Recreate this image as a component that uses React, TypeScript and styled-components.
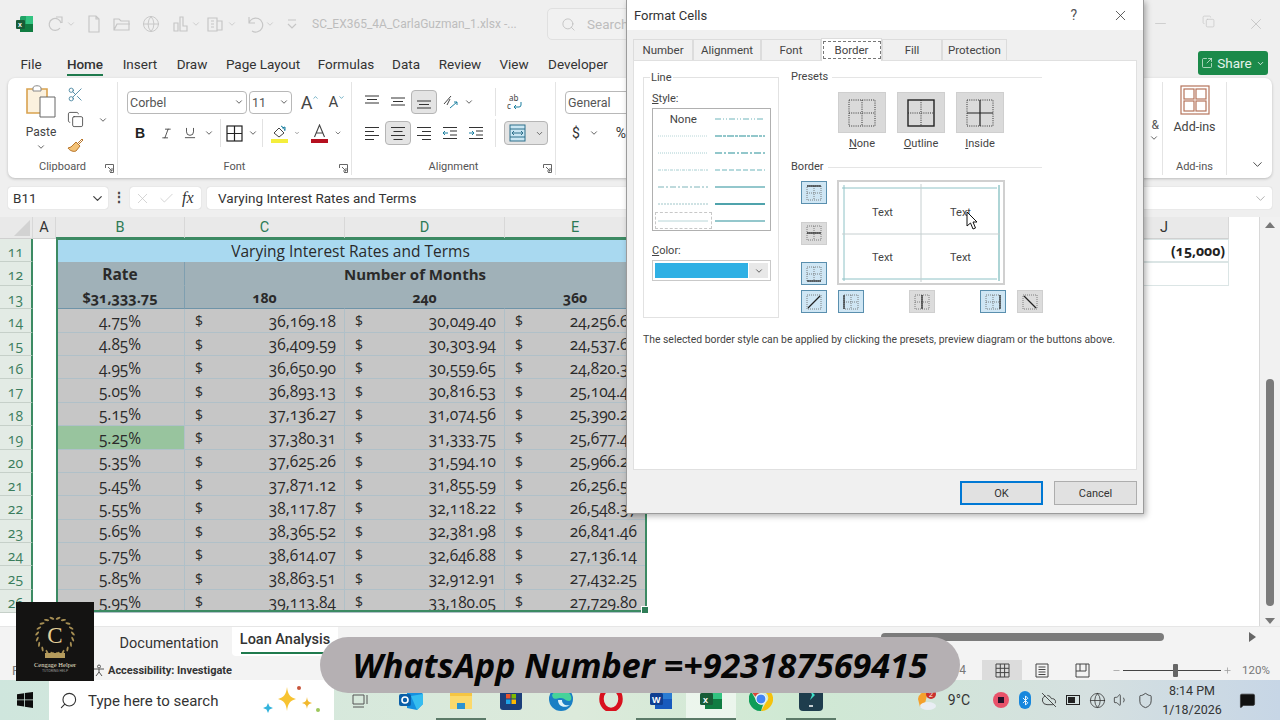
import * as React from 'react';
import styled, { createGlobalStyle } from 'styled-components';
import {
  ChevronDown,
  ChevronUp,
  Copy,
  Globe,
  Italic,
  Minus,
  Plus,
  Scissors,
  Search,
  Underline,
  Volume1,
  X,
  Check,
  Bluetooth,
  CloudOff,
  Shield,
  MessageSquare,
  SquareArrowOutUpRight,
} from 'lucide-react';

const uiFont = `Roboto, "Noto Sans", sans-serif`;
const cellFont = `"Open Sans", "Noto Sans", sans-serif`;

const GlobalStyle = createGlobalStyle`
  html, body { margin: 0; padding: 0; }
  body { font-family: ${uiFont}; overflow: hidden; }
  * { box-sizing: border-box; }
`;

const Page = styled.div`
  position: relative;
  width: 1280px;
  height: 720px;
  overflow: hidden;
  background: #efefef;
  display: flex;
  flex-direction: column;
`;

/* title bar */
const TitleBar = styled.div`
  height: 47px;
  display: flex;
  align-items: center;
  padding: 1px 0 0 16px;
  color: #c4c4c4;
  flex: none;
`;
const QuickGap = styled.span<{ $w: number; $ml?: number }>`
  display: inline-flex;
  justify-content: center;
  width: ${(p) => p.$w}px;
  margin-left: ${(p) => p.$ml ?? 0}px;
  flex: none;
`;
const FileName = styled.span`
  font-size: 12px;
  color: #bdbdbd;
  white-space: nowrap;
  width: 235px;
  margin-left: 10px;
`;
const SearchBox = styled.div`
  width: 170px;
  height: 32px;
  border: 1px solid #e0e0e0;
  border-radius: 5px;
  background: #f1f1f1;
  display: flex;
  align-items: center;
  padding-left: 13px;
  gap: 11px;
  font-size: 13.5px;
  color: #bdbdbd;
`;
const WindowButtons = styled.div`
  margin-left: auto;
  display: flex;
  color: #c2c2c2;
`;
const WindowButton = styled.span`
  width: 48px;
  display: flex;
  justify-content: center;
`;

/* ribbon tabs */
const TabRow = styled.div`
  height: 31px;
  display: flex;
  padding-left: 4px;
  flex: none;
`;
const Tab = styled.span<{ $w: number; $active?: boolean }>`
  position: relative;
  width: ${(p) => p.$w}px;
  text-align: center;
  font-size: 13.5px;
  line-height: 35px;
  color: #333;
  font-weight: ${(p) => (p.$active ? 500 : 400)};
  &::after {
    content: '';
    display: ${(p) => (p.$active ? 'block' : 'none')};
    position: absolute;
    left: 9px;
    right: 9px;
    bottom: 2px;
    height: 2px;
    background: #1f7a4d;
  }
`;
const ShareButton = styled.div`
  margin: 4px 12px 3px auto;
  width: 70px;
  background: #1b8a4a;
  color: #e6f3ea;
  border-radius: 3px;
  display: flex;
  align-items: center;
  justify-content: center;
  gap: 4px;
  font-size: 13.5px;
`;

/* ribbon */
const Ribbon = styled.div`
  height: 100px;
  margin: 0 8px;
  background: #fff;
  border-radius: 7px;
  box-shadow: 0 1px 3px rgba(0, 0, 0, 0.22);
  display: flex;
  flex: none;
  padding: 4px 0 3px;
`;
const Group = styled.div<{ $w: number; $noLine?: boolean }>`
  position: relative;
  width: ${(p) => p.$w}px;
  flex: none;
  display: flex;
  flex-direction: column;
  border-right: ${(p) => (p.$noLine ? 'none' : '1px solid #e4e4e4')};
`;
const GroupBody = styled.div`
  flex: 1;
  display: flex;
  min-height: 0;
`;
const GroupLabel = styled.div`
  height: 17px;
  font-size: 11px;
  line-height: 18px;
  text-align: center;
  color: #555;
  white-space: nowrap;
`;
const Launcher = styled.svg`
  position: absolute;
  right: 3px;
  bottom: 2px;
  width: 9px;
  height: 9px;
`;
const PasteColumn = styled.div`
  width: 50px;
  margin-left: 8px;
  display: flex;
  flex-direction: column;
  align-items: center;
  font-size: 12px;
  line-height: 15px;
  color: #444;
`;
const PasteIcon = styled.svg`
  margin: 2px 0 7px;
`;
const PasteChevron = styled.span`
  margin-top: 2px;
  display: flex;
`;
const SmallColumn = styled.div`
  width: 42px;
  display: flex;
  flex-direction: column;
`;
const SmallRow = styled.div`
  height: 26px;
  display: flex;
  align-items: center;
  justify-content: space-between;
  padding: 0 0 0 1px;
`;
const ControlRows = styled.div<{ $pad: number }>`
  display: flex;
  flex-direction: column;
  gap: 7px;
  padding: 8px 0 0 ${(p) => p.$pad}px;
`;
const ControlRow = styled.div`
  display: flex;
  align-items: center;
  height: 24px;
`;
const Combo = styled.div<{ $w: number }>`
  width: ${(p) => p.$w}px;
  height: 23px;
  border: 1px solid #b8b8b8;
  border-radius: 4px;
  margin-right: 2px;
  font-size: 12.5px;
  color: #555;
  display: flex;
  align-items: center;
  justify-content: space-between;
  padding: 0 2px 0 2px;
  flex: none;
`;
const Tool = styled.span<{ $w?: number; $ml?: number; $on?: boolean; $gap?: number }>`
  width: ${(p) => p.$w ?? 26}px;
  margin-left: ${(p) => p.$ml ?? 0}px;
  height: 24px;
  flex: none;
  display: inline-flex;
  align-items: center;
  justify-content: center;
  gap: ${(p) => p.$gap ?? 0}px;
  color: #333;
  font-size: 14px;
  border-radius: 4px;
  background: ${(p) => (p.$on ? '#e4e4e4' : 'transparent')};
  border: ${(p) => (p.$on ? '1px solid #b5b5b5' : 'none')};
`;
const ToolDivider = styled.span<{ $ml: number; $mr: number }>`
  width: 1px;
  height: 28px;
  flex: none;
  background: #e2e2e2;
  margin: 0 ${(p) => p.$mr}px 0 ${(p) => p.$ml}px;
`;
const BoldGlyph = styled.b`
  font-family: 'Liberation Sans', sans-serif;
  font-size: 14px;
  color: #222;
`;
const GrowA = styled.span<{ $small?: boolean }>`
  font-size: ${(p) => (p.$small ? 15 : 18)}px;
  color: #444;
`;
const GrowMark = styled.span`
  display: flex;
  align-self: flex-start;
  margin-top: 4px;
  color: #1a7fa0;
`;
const AddInsBody = styled.div`
  flex: 1;
  display: flex;
  flex-direction: column;
  align-items: center;
  font-size: 12.5px;
  color: #444;
  gap: 4px;
  padding-top: 3px;
`;
const CollapseSlot = styled.div`
  flex: 1;
  display: flex;
  align-items: flex-end;
  justify-content: flex-end;
  padding: 0 7px 3px 0;
  color: #333;
`;
const FillFlex = styled.div`
  flex: 1;
`;
const ClippedMark = styled.div`
  width: 100%;
  text-align: right;
  padding: 36px 3px 0 0;
  font-size: 12px;
  color: #555;
  line-height: 14px;
`;

/* formula bar */
const FormulaBar = styled.div`
  height: 22px;
  margin: 9px 8px 0;
  display: flex;
  align-items: stretch;
  flex: none;
`;
const NameBox = styled.div`
  width: 100px;
  background: #fff;
  border-radius: 3px;
  box-shadow: 0 0 1px rgba(0, 0, 0, 0.25);
  display: flex;
  align-items: center;
  justify-content: space-between;
  padding: 0 3px 0 5px;
  font-size: 13.5px;
  color: #333;
`;
const Dots = styled.div`
  width: 22px;
  text-align: center;
  font-weight: 700;
  font-size: 14px;
  line-height: 20px;
  color: #444;
`;
const FormulaButtons = styled.div`
  width: 71px;
  background: #fff;
  border-radius: 3px;
  box-shadow: 0 0 1px rgba(0, 0, 0, 0.25);
  display: flex;
  align-items: center;
  gap: 7px;
  padding-left: 4px;
  color: #c4c4c4;
`;
const FxMark = styled.i`
  font-family: 'Liberation Serif', serif;
  font-size: 16px;
  color: #333;
`;
const FormulaInput = styled.div`
  flex: 1;
  margin-left: 6px;
  background: #fff;
  border-radius: 3px;
  box-shadow: 0 0 1px rgba(0, 0, 0, 0.25);
  display: flex;
  align-items: center;
  justify-content: space-between;
  padding: 0 4px 0 11px;
  font-size: 13.5px;
  color: #333;
`;

/* sheet */
const SheetArea = styled.div`
  margin-top: 8px;
  height: 409px;
  display: flex;
  flex: none;
  background: #fff;
`;
const SheetGrid = styled.div`
  position: relative;
  width: 1259px;
  height: 409px;
  overflow: hidden;
  display: grid;
  grid-template-columns: 33px 23px 129px 160px 160px 141px 454px 129px 30px;
  grid-template-rows: 22px repeat(16, 23.4px);
  font-family: ${cellFont};
  font-variant-numeric: oldstyle-nums;
  color: #2a2a2a;
`;
const ColumnHead = styled.div<{ $on?: boolean }>`
  background: #e9e9e9;
  border-right: 1px solid #d8d8d8;
  border-bottom: ${(p) => (p.$on ? '2px solid #3c8a63' : '1px solid #d0d0d0')};
  color: ${(p) => (p.$on ? '#2c7a55' : '#333')};
  font-family: ${uiFont};
  font-size: 14.5px;
  line-height: 22px;
  text-align: center;
`;
const Corner = styled(ColumnHead)`
  position: relative;
  &::after {
    content: '';
    position: absolute;
    right: 2px;
    bottom: 2px;
    border-left: 16px solid transparent;
    border-bottom: 16px solid #d2d2d2;
  }
`;
const RowNumber = styled.div`
  background: #e3ebe5;
  border-bottom: 1px solid #c6d0c9;
  border-right: 2px solid #3c8a63;
  color: #3b7d5d;
  font-size: 14px;
  line-height: 25px;
  text-align: center;
`;
const Cell = styled.div<{
  $bg?: string;
  $span?: number;
  $bold?: boolean;
  $size?: number;
  $plain?: boolean;
  $under?: string;
  $right?: string;
}>`
  grid-column: span ${(p) => p.$span ?? 1};
  background: ${(p) => p.$bg ?? '#c6c6c6'};
  font-size: ${(p) => p.$size ?? 15.5}px;
  font-weight: ${(p) => (p.$bold ? 700 : 400)};
  white-space: nowrap;
  overflow: hidden;
  display: flex;
  align-items: center;
  justify-content: center;
  padding-top: 1px;
  border-right: 1px solid ${(p) => p.$right ?? (p.$plain ? 'transparent' : '#b0c0c8')};
  border-bottom: 1px solid ${(p) => p.$under ?? (p.$plain ? 'transparent' : '#b0c0c8')};
`;
const MoneyCell = styled(Cell)`
  justify-content: space-between;
  padding: 1px 8px 0 10px;
`;
const Dollar = styled.span`
  font-size: 14px;
`;
const Blank = styled.div<{ $span?: number }>`
  grid-column: span ${(p) => p.$span ?? 1};
  background: #fff;
`;
const OutcomeCell = styled.div<{ $bold?: boolean }>`
  border-right: 1px solid #dbe5e5;
  border-bottom: 1px solid #dbe5e5;
  border-top: 1px solid #dbe5e5;
  text-align: right;
  padding-right: 3px;
  font-size: 14px;
  line-height: 22px;
  font-weight: ${(p) => (p.$bold ? 700 : 400)};
  color: #222;
`;
const Selection = styled.div`
  position: absolute;
  left: 56px;
  top: 21px;
  width: 591px;
  height: 374px;
  border: 2px solid #3c8a63;
  pointer-events: none;
  &::after {
    content: '';
    position: absolute;
    right: -4px;
    bottom: -4px;
    width: 6px;
    height: 6px;
    background: #2f7d57;
    border: 1px solid #fff;
  }
`;
const VScroll = styled.div`
  width: 21px;
  height: 409px;
  background: #f1f1f1;
  border-left: 1px solid #d8d8d8;
  display: flex;
  flex-direction: column;
  align-items: center;
  padding: 5px 0 2px;
`;
const ArrowUp = styled.div`
  border: 5px solid transparent;
  border-bottom: 6px solid #777;
  border-top: none;
`;
const ArrowDown = styled.div`
  border: 5px solid transparent;
  border-top: 6px solid #777;
  border-bottom: none;
  margin-top: 12px;
`;
const VThumb = styled.div`
  width: 8px;
  height: 227px;
  background: #7b7b7b;
  border-radius: 4px;
  margin-top: auto;
`;

/* sheet tabs */
const SheetTabs = styled.div`
  height: 34px;
  display: flex;
  align-items: stretch;
  padding-left: 106px;
  flex: none;
  background: #f3f3f3;
  border-top: 1px solid #e6e6e6;
  font-size: 14.5px;
  color: #333;
`;
const SheetTab = styled.div<{ $active?: boolean }>`
  width: ${(p) => (p.$active ? 106 : 126)}px;
  text-align: center;
  padding-top: ${(p) => (p.$active ? 4 : 8)}px;
  height: ${(p) => (p.$active ? '29px' : 'auto')};
  background: ${(p) => (p.$active ? '#fff' : 'transparent')};
  border-radius: 0 0 4px 4px;
  position: relative;
  font-weight: ${(p) => (p.$active ? 500 : 400)};
  &::after {
    content: '';
    display: ${(p) => (p.$active ? 'block' : 'none')};
    position: absolute;
    left: 9px;
    right: 9px;
    bottom: 2px;
    height: 2px;
    background: #1f7a4d;
  }
`;
const HScroll = styled.div`
  flex: 1;
  display: flex;
  align-items: center;
  padding: 0 24px 14px 0;
`;
const HThumb = styled.div`
  width: 283px;
  height: 8px;
  border-radius: 4px;
  background: #7b7b7b;
  margin-left: 543px;
`;
const ArrowRight = styled.div`
  margin-left: auto;
  border: 5px solid transparent;
  border-left: 7px solid #666;
  border-right: none;
`;

/* status bar */
const StatusBar = styled.div`
  height: 20px;
  display: flex;
  align-items: center;
  font-size: 11px;
  color: #444;
  padding-left: 12px;
  flex: none;
  background: #f3f3f3;
`;
const ReadyText = styled.span`
  width: 81px;
  color: #777;
  font-size: 13px;
`;
const A11y = styled.span`
  display: inline-flex;
  align-items: center;
  gap: 2px;
  font-weight: 700;
  font-size: 11px;
  color: #333;
`;
const CountText = styled.span`
  margin-left: auto;
  margin-right: 16px;
  color: #777;
  font-size: 12px;
`;
const ViewButton = styled.span<{ $on?: boolean }>`
  width: 40px;
  height: 20px;
  display: inline-flex;
  align-items: center;
  justify-content: center;
  background: ${(p) => (p.$on ? '#dcdcdc' : 'transparent')};
`;
const ZoomSlider = styled.div`
  margin-left: 10px;
  display: flex;
  align-items: center;
  color: #999;
  width: 120px;
  justify-content: space-between;
`;
const ZoomTrack = styled.div`
  position: relative;
  width: 98px;
  height: 1px;
  background: #444;
`;
const ZoomKnob = styled.span`
  position: absolute;
  left: 50px;
  top: -6px;
  width: 5px;
  height: 13px;
  background: #666;
  border-radius: 1px;
`;
const ZoomValue = styled.span`
  width: 48px;
  text-align: center;
  color: #777;
  font-size: 11.5px;
`;

/* task bar */
const TaskBar = styled.div`
  height: 40px;
  display: flex;
  align-items: stretch;
  flex: none;
  background: linear-gradient(90deg, #cfe6dd 0%, #dceadb 45%, #cfe9d3 62%, #d5e0e0 85%, #c7d6e6 100%);
`;
const StartSlot = styled.div`
  width: 49px;
  display: flex;
  align-items: center;
  justify-content: center;
`;
const TaskSearch = styled.div`
  width: 285px;
  background: #fff;
  display: flex;
  align-items: center;
  padding: 1px 0 0 10px;
  gap: 10px;
  font-size: 15px;
  color: #333;
  position: relative;
`;
const Sparkle = styled.svg`
  position: absolute;
  right: 9px;
  top: 5px;
`;
const FlippedSearch = styled(Search)`
  transform: scaleX(-1);
`;
const TaskSlot = styled.div<{ $w?: number; $open?: boolean; $active?: boolean }>`
  width: ${(p) => p.$w ?? 50}px;
  flex: none;
  display: flex;
  align-items: center;
  justify-content: center;
  background: ${(p) => (p.$active ? 'rgba(255,255,255,0.55)' : 'transparent')};
  border-bottom: 2px solid ${(p) => (p.$open ? '#5b7a68' : 'transparent')};
`;
const Tray = styled.div`
  margin-left: auto;
  display: flex;
  align-items: center;
  color: #333;
`;
const WeatherText = styled.span`
  font-size: 14px;
  color: #333;
  margin: 0 19px 0 10px;
`;
const TraySlot = styled.span`
  position: relative;
  width: 24px;
  display: inline-flex;
  justify-content: center;
  align-items: center;
`;
const BluetoothMark = styled(Bluetooth)`
  position: absolute;
`;
const Clock = styled.div`
  width: 70px;
  text-align: center;
  font-size: 12.5px;
  line-height: 19px;
  color: #333;
`;
const NotifySlot = styled.span`
  width: 44px;
  display: inline-flex;
  justify-content: center;
  margin: 0 11px 0 -2px;
`;

/* overlays */
const Watermark = styled.div`
  position: absolute;
  left: 320px;
  top: 637px;
  width: 640px;
  height: 56px;
  background: #b5b0b3;
  border-radius: 28px;
  display: flex;
  align-items: center;
  justify-content: center;
  font-family: "Noto Sans", sans-serif;
  font-size: 34px;
  font-weight: 700;
  font-style: italic;
  color: #060606;
  white-space: nowrap;
`;
const LogoBox = styled.div`
  position: absolute;
  left: 16px;
  top: 602px;
  width: 78px;
  height: 79px;
  background: #141312;
  display: flex;
  flex-direction: column;
  align-items: center;
  padding-top: 14px;
`;
const LogoRing = styled.div`
  position: relative;
  width: 42px;
  height: 40px;
  display: flex;
  align-items: center;
  justify-content: center;
  font-family: 'Liberation Serif', serif;
  font-size: 23px;
  color: #e3cf9a;
`;
const LogoSvg = styled.svg`
  position: absolute;
  inset: 0;
`;
const LogoBanner = styled.div`
  width: 20px;
  height: 5px;
  margin-top: -3px;
  background: #b59b5c;
  position: relative;
`;
const LogoTitle = styled.div`
  font-family: 'Liberation Serif', serif;
  font-size: 6.5px;
  line-height: 8px;
  margin-top: 3px;
  color: #e9e2cf;
`;
const LogoSub = styled.div`
  font-size: 3.5px;
  line-height: 5px;
  color: #9a9a9a;
`;

/* dialog */
const Dialog = styled.div`
  position: absolute;
  left: 626px;
  top: 0;
  width: 518px;
  height: 514px;
  background: #f0f0f0;
  border: 1px solid #9b9b9b;
  border-top: none;
  box-shadow: 2px 2px 6px rgba(0, 0, 0, 0.3);
  display: flex;
  flex-direction: column;
  font-size: 11px;
  color: #444;
`;
const DialogTitle = styled.div`
  height: 30px;
  background: #fff;
  display: flex;
  align-items: center;
  padding-left: 7px;
  font-size: 13px;
  color: #333;
  flex: none;
`;
const HelpMark = styled.span`
  margin-left: auto;
  margin-right: 35px;
  font-size: 14px;
  color: #555;
`;
const DialogClose = styled.span`
  margin-right: 14px;
  display: flex;
  color: #333;
`;
const DialogTabs = styled.div`
  display: flex;
  align-items: flex-end;
  height: 30px;
  padding-left: 6px;
  flex: none;
`;
const DialogTab = styled.div<{ $w: number; $on?: boolean }>`
  width: ${(p) => p.$w}px;
  height: ${(p) => (p.$on ? 23 : 21)}px;
  background: ${(p) => (p.$on ? '#fff' : '#f0f0f0')};
  border: 1px solid #dcdcdc;
  border-bottom: none;
  display: flex;
  align-items: center;
  justify-content: center;
  margin-bottom: ${(p) => (p.$on ? -1 : 0)}px;
  position: relative;
  z-index: ${(p) => (p.$on ? 1 : 0)};
  font-size: 11.5px;
`;
const FocusLabel = styled.span`
  border: 1px dashed #777;
  padding: 1px 11px;
`;
const DialogPanel = styled.div`
  width: 504px;
  height: 410px;
  margin-left: 6px;
  background: #fff;
  border: 1px solid #e0e0e0;
  padding: 16px 9px 0;
  flex: none;
`;
const Columns = styled.div`
  display: flex;
`;
const LineGroup = styled.fieldset`
  width: 136px;
  height: 241px;
  margin: 0 12px 0 0;
  border: 1px solid #e2e2e2;
  padding: 14px 7px 0 8px;
  min-width: 0;
  flex: none;
  position: relative;
`;
const GroupLegend = styled.span`
  position: absolute;
  left: 6px;
  top: -6px;
  background: #fff;
  padding: 0 1px;
  line-height: 12px;
`;
const FieldLabel = styled.div`
  line-height: 14px;
  margin-bottom: 2px;
`;
const StyleList = styled.div`
  width: 119px;
  height: 123px;
  border: 1px solid #b0b0b0;
  display: grid;
  grid-template-columns: 1fr 1fr;
  grid-template-rows: repeat(7, 1fr);
  padding: 1px 2px;
  margin-bottom: 13px;
`;
const StyleItem = styled.div<{ $boxed?: boolean }>`
  display: flex;
  align-items: center;
  justify-content: center;
  font-size: 11.5px;
  outline: ${(p) => (p.$boxed ? '1px dashed #c8c8c8' : 'none')};
  outline-offset: -1px;
`;
const ColorCombo = styled.div`
  width: 119px;
  height: 21px;
  border: 1px solid #c9c9c9;
  padding: 2px;
  display: flex;
  background: #fff;
`;
const ColorSwatch = styled.div`
  flex: 1;
  background: #2fb0e4;
`;
const ColorDrop = styled.div`
  width: 19px;
  display: flex;
  align-items: center;
  justify-content: center;
  background: #e8e8e8;
  color: #666;
  margin-left: 1px;
`;
const RightColumn = styled.div`
  width: 251px;
`;
const RuleTitle = styled.div<{ $mt: number }>`
  display: flex;
  align-items: center;
  gap: 4px;
  line-height: 12px;
  margin-top: ${(p) => p.$mt}px;
  &::after {
    content: '';
    flex: 1;
    height: 1px;
    background: #e5e5e5;
  }
`;
const PresetRow = styled.div`
  display: flex;
  gap: 11px;
  padding-left: 47px;
  margin-top: 9px;
  height: 62px;
`;
const Preset = styled.div`
  width: 48px;
  display: flex;
  flex-direction: column;
  align-items: center;
  gap: 4px;
  line-height: 14px;
`;
const PresetCaption = styled.span`
  white-space: nowrap;
`;
const PresetFace = styled.div`
  width: 48px;
  height: 41px;
  background: #dadada;
  border: 1px solid #cfcfcf;
  display: flex;
  align-items: center;
  justify-content: center;
  flex: none;
`;
const BorderBlock = styled.div`
  display: grid;
  grid-template-columns: 26px 168px;
  column-gap: 10px;
  margin-top: 7px;
  padding-left: 10px;
`;
const SideButtons = styled.div`
  display: flex;
  flex-direction: column;
  justify-content: space-between;
  height: 104px;
  margin-top: 1px;
`;
const BorderToggle = styled.div<{ $on?: boolean; $ml?: number }>`
  width: 26px;
  height: 23px;
  flex: none;
  margin-left: ${(p) => p.$ml ?? 0}px;
  background: ${(p) => (p.$on ? '#cfe6f4' : '#dcdcdc')};
  border: 1px solid ${(p) => (p.$on ? '#5a8fae' : '#cfcfcf')};
  display: flex;
  align-items: center;
  justify-content: center;
`;
const PreviewBox = styled.div`
  position: relative;
  width: 168px;
  height: 105px;
  border: 2px solid #d0d0d0;
  display: grid;
  grid-template-columns: 1fr 1fr;
  grid-template-rows: 1fr 1fr;
`;
const PreviewLines = styled.svg`
  position: absolute;
  left: 0;
  top: 0;
`;
const PreviewText = styled.div<{ $top?: boolean; $right?: boolean }>`
  display: flex;
  align-items: center;
  justify-content: center;
  padding-top: ${(p) => (p.$top ? 10 : 0)}px;
  padding-left: ${(p) => (p.$right ? 0 : 5)}px;
  padding-right: ${(p) => (p.$right ? 3 : 0)}px;
`;
const BottomToggles = styled.div`
  display: flex;
  padding-left: 10px;
  margin-top: 5px;
`;
const CursorSvg = styled.svg`
  position: absolute;
  left: 127px;
  top: 29px;
`;
const HintText = styled.p`
  margin: 15px 0 0;
  font-size: 10.4px;
  line-height: 14px;
  white-space: nowrap;
`;
const DialogFooter = styled.div`
  display: flex;
  justify-content: flex-end;
  gap: 11px;
  padding: 11px 6px 0 0;
`;
const DialogButton = styled.div<{ $primary?: boolean }>`
  width: 83px;
  height: 24px;
  background: #e1e1e1;
  border: ${(p) => (p.$primary ? '2px solid #0078d4' : '1px solid #adadad')};
  display: flex;
  align-items: center;
  justify-content: center;
  color: #333;
`;

const ExcelLogo = () => (
  <svg width="17" height="18" viewBox="0 0 17 18">
    <rect x="4" y="1" width="13" height="16" rx="1.5" fill="#21a366" />
    <rect x="10" y="1" width="7" height="8" fill="#33c481" />
    <rect x="4" y="9" width="13" height="8" fill="#107c41" />
    <rect x="0" y="5" width="9" height="9" rx="1" fill="#185c37" />
    <text x="2" y="12" fontSize="7" fontWeight="700" fill="#fff" fontFamily="Liberation Sans">x</text>
  </svg>
);

const QuickIcon = ({ kind }: { kind: string }) => {
  const stroke = { fill: 'none', stroke: '#c6c6c6', strokeWidth: 1.2 };
  return (
    <svg width="20" height="20" viewBox="0 0 20 20" {...stroke}>
      {kind === 'redo' && <path d="M15 9a6 6 0 1 0-1 5M10 3h6v6" />}
      {kind === 'undo' && <path d="M5 3v6h6M5 9a7 7 0 1 1 3 8" />}
      {kind === 'doc' && <path d="M5 2h7l3 3v13H5zM12 2v3h3" />}
      {kind === 'open' && <path d="M2 16V5h5l2 2h8v9zM2 16l3-6h13" />}
      {kind === 'touch' && <path d="M3 9h4v8H3zM9 3h3v9h4v5H9z" />}
      {kind === 'multi' && <path d="M3 4h9v13H3zM12 7h5v9h-5zM6 7h3M6 10h3M6 13h3" />}
      {kind === 'caret' && <path d="M6 6h8M6 10l4 4 4-4" />}
    </svg>
  );
};

const AlignLines = ({ rows, offset = 0 }: { rows: number[]; offset?: number }) => (
  <svg width="16" height="14" viewBox="0 0 16 14" stroke="#333" strokeWidth="1">
    {rows.map((w, i) => {
      const gap = rows.length === 4 ? 4 : 4.5;
      const x = offset === 0 ? 1 : offset === 1 ? (16 - w) / 2 : 15 - w;
      return <line key={i} x1={x} x2={x + w} y1={1.5 + i * gap} y2={1.5 + i * gap} />;
    })}
  </svg>
);

const VertAlign = ({ pos }: { pos: 'top' | 'mid' | 'bot' }) => {
  const start = pos === 'top' ? 1 : pos === 'mid' ? 3 : 6;
  return (
    <svg width="16" height="14" viewBox="0 0 16 14" stroke="#333" strokeWidth="1">
      <line x1="1" x2="15" y1={start} y2={start} />
      <line x1="3" x2="13" y1={start + 3.5} y2={start + 3.5} />
      <line x1="1" x2="15" y1={start + 7} y2={start + 7} />
    </svg>
  );
};

const IndentIcon = ({ flip }: { flip?: boolean }) => (
  <svg width="16" height="14" viewBox="0 0 16 14" fill="none" stroke="#333">
    <path d="M1 1.5h14M8 5h7M8 9h7M1 12.5h14" />
    <path d={flip ? 'M1 7h5M4 5l2 2-2 2' : 'M6 7H1M3 5 1 7l2 2'} stroke="#1a7fa0" />
  </svg>
);

const BoxGlyph = ({ top, left, right, bottom, hMid, vMid, diagA, diagB }: {
  top?: boolean; left?: boolean; right?: boolean; bottom?: boolean; hMid?: boolean;
  vMid?: boolean; diagA?: boolean; diagB?: boolean;
}) => (
  <svg width="16" height="16" viewBox="0 0 16 16" fill="none" stroke="#666" strokeWidth="0.8">
    <rect x="1" y="1" width="14" height="14" strokeDasharray="1 1" />
    {!diagA && !diagB && <path d="M8 1v14M1 8h14" strokeDasharray="1 1" />}
    <g stroke="#222" strokeWidth="1.2">
      {top && <path d="M1 1h14" />}
      {bottom && <path d="M1 15h14" />}
      {left && <path d="M1 1v14" />}
      {right && <path d="M15 1v14" />}
      {hMid && <path d="M1 8h14" />}
      {vMid && <path d="M8 1v14" />}
      {diagA && <path d="M2 14 14 2" />}
      {diagB && <path d="M2 2l12 12" />}
    </g>
  </svg>
);

const PresetGlyph = ({ outline, inner }: { outline?: boolean; inner?: boolean }) => (
  <svg width="28" height="28" viewBox="0 0 28 28" fill="none">
    <rect x="1" y="1" width="26" height="26" stroke="#222" strokeWidth={outline ? 1.4 : 0.9} strokeDasharray={outline ? undefined : '1 1.2'} />
    <path d="M14 1v26M1 14h26" stroke="#222" strokeWidth={inner ? 1.2 : 0.9} strokeDasharray={inner ? undefined : '1 1.2'} />
  </svg>
);

const LineSample = ({ dash, width = 1, color = '#6fb5bb' }: { dash?: string; width?: number; color?: string }) => (
  <svg width="50" height="4" viewBox="0 0 50 4">
    <line x1="0" x2="50" y1="2" y2="2" stroke={color} strokeWidth={width} strokeDasharray={dash} />
  </svg>
);

const LogoWreath = () => (
  <LogoSvg viewBox="0 0 42 40" fill="#a68e53">
    {[...Array(11)].map((_, i) => {
      const a = (-80 + i * 18) * (Math.PI / 180);
      const lx = 21 - Math.cos(a) * 18;
      const rx = 21 + Math.cos(a) * 18;
      const y = 20 + Math.sin(a) * 18;
      const deg = -80 + i * 18;
      return (
        <React.Fragment key={i}>
          <ellipse cx={lx} cy={y} rx="1" ry="2.6" transform={`rotate(${-deg + 35} ${lx} ${y})`} />
          <ellipse cx={rx} cy={y} rx="1" ry="2.6" transform={`rotate(${deg - 35} ${rx} ${y})`} />
        </React.Fragment>
      );
    })}
  </LogoSvg>
);

const lineSamples: (React.ReactNode)[] = [
  'None',
  <LineSample key="a" dash="6 2 1 2 1 2" />,
  <LineSample key="b" dash="1 1" color="#b8d6d8" />,
  <LineSample key="c" dash="7 1 3 1" width={1.5} />,
  <LineSample key="d" dash="1 1" color="#a8cfd2" />,
  <LineSample key="e" dash="7 2 2 2" width={1.3} />,
  <LineSample key="f" dash="3 1 1 1" color="#a8cfd2" />,
  <LineSample key="g" dash="5 2" width={1.2} />,
  <LineSample key="h" dash="6 2 2 2" color="#7fb5ba" />,
  <LineSample key="i" width={1.5} />,
  <LineSample key="j" dash="2 1" color="#9fc6c9" />,
  <LineSample key="k" width={2} color="#4fa3ac" />,
  <LineSample key="l" width={1} color="#b8d6d8" />,
  <LineSample key="m" width={1.5} />,
];

type LoanRow = { row: number; rate: string; c: string; d: string; e: string; hit?: boolean };

const loanRows: LoanRow[] = [
  { row: 14, rate: '4.75%', c: '36,169.18', d: '30,049.40', e: '24,256.69' },
  { row: 15, rate: '4.85%', c: '36,409.59', d: '30,303.94', e: '24,537.62' },
  { row: 16, rate: '4.95%', c: '36,650.90', d: '30,559.65', e: '24,820.37' },
  { row: 17, rate: '5.05%', c: '36,893.13', d: '30,816.53', e: '25,104.46' },
  { row: 18, rate: '5.15%', c: '37,136.27', d: '31,074.56', e: '25,390.24' },
  { row: 19, rate: '5.25%', c: '37,380.31', d: '31,333.75', e: '25,677.45', hit: true },
  { row: 20, rate: '5.35%', c: '37,625.26', d: '31,594.10', e: '25,966.27' },
  { row: 21, rate: '5.45%', c: '37,871.12', d: '31,855.59', e: '26,256.54' },
  { row: 22, rate: '5.55%', c: '38,117.87', d: '32,118.22', e: '26,548.37' },
  { row: 23, rate: '5.65%', c: '38,365.52', d: '32,381.98', e: '26,841.46' },
  { row: 24, rate: '5.75%', c: '38,614.07', d: '32,646.88', e: '27,136.14' },
  { row: 25, rate: '5.85%', c: '38,863.51', d: '32,912.91', e: '27,432.25' },
  { row: 26, rate: '5.95%', c: '39,113.84', d: '33,180.05', e: '27,729.80' },
];

const ribbonTabs: [string, number, boolean?][] = [
  ['File', 54],
  ['Home', 54, true],
  ['Insert', 56],
  ['Draw', 48],
  ['Page Layout', 94],
  ['Formulas', 72],
  ['Data', 48],
  ['Review', 60],
  ['View', 48],
  ['Developer', 80],
];

const LauncherIcon = () => (
  <Launcher viewBox="0 0 9 9" fill="none" stroke="#666">
    <path d="M.5 4V.5H8.5V8.5H5M3 3l4 4M4 7h3V4" />
  </Launcher>
);

const Chev = ({ size = 10, color = '#444' }: { size?: number; color?: string }) => (
  <ChevronDown size={size} color={color} strokeWidth={2} />
);

const App = (): React.ReactElement => (
  <Page>
    <GlobalStyle />
    <TitleBar>
      <QuickGap $w={17}><ExcelLogo /></QuickGap>
      <QuickGap $w={20} $ml={13}><QuickIcon kind="redo" /></QuickGap>
      <QuickGap $w={10}><Chev color="#c6c6c6" /></QuickGap>
      <QuickGap $w={20} $ml={8}><QuickIcon kind="doc" /></QuickGap>
      <QuickGap $w={20} $ml={8}><QuickIcon kind="open" /></QuickGap>
      <QuickGap $w={20} $ml={9}><Globe size={18} strokeWidth={1.2} /></QuickGap>
      <QuickGap $w={20} $ml={10}><QuickIcon kind="touch" /></QuickGap>
      <QuickGap $w={10}><Chev color="#c6c6c6" /></QuickGap>
      <QuickGap $w={20} $ml={4}><QuickIcon kind="multi" /></QuickGap>
      <QuickGap $w={10} $ml={2}><Chev color="#c6c6c6" /></QuickGap>
      <QuickGap $w={20} $ml={7}><QuickIcon kind="undo" /></QuickGap>
      <QuickGap $w={10} $ml={1}><Chev color="#c6c6c6" /></QuickGap>
      <QuickGap $w={20} $ml={7}><QuickIcon kind="caret" /></QuickGap>
      <FileName>SC_EX365_4A_CarlaGuzman_1.xlsx  -...</FileName>
      <SearchBox><Search size={15} strokeWidth={1.3} />Search</SearchBox>
      <WindowButtons>
        <WindowButton><Minus size={17} strokeWidth={1} /></WindowButton>
        <WindowButton><Copy size={13} strokeWidth={1.2} /></WindowButton>
        <WindowButton><X size={18} strokeWidth={1.1} /></WindowButton>
      </WindowButtons>
    </TitleBar>

    <TabRow>
      {ribbonTabs.map(([label, w, active]) => (
        <Tab key={label} $w={w} $active={active}>{label}</Tab>
      ))}
      <ShareButton>
        <SquareArrowOutUpRight size={12} strokeWidth={1.4} />Share<Chev size={9} color="#fff" />
      </ShareButton>
    </TabRow>

    <Ribbon>
      <Group $w={110}>
        <GroupBody>
          <PasteColumn>
            <PasteIcon width="32" height="34" viewBox="0 0 32 34" fill="none">
              <path d="M2 5h20v24H2z" fill="#fbf1de" stroke="#d9a24f" strokeWidth="1.6" />
              <path d="M8 4c0-3 8-3 8 0v3H8z" fill="#fff" stroke="#888" />
              <path d="M15 13h15v20H15z" fill="#fff" stroke="#666" />
            </PasteIcon>
            Paste
            <PasteChevron><Chev /></PasteChevron>
          </PasteColumn>
          <SmallColumn>
            <SmallRow>
              <Scissors size={17} color="#3f7f9c" strokeWidth={1.2} />
            </SmallRow>
            <SmallRow>
              <Copy size={17} color="#444" strokeWidth={1.2} />
              <Chev />
            </SmallRow>
            <SmallRow>
              <svg width="17" height="17" viewBox="0 0 17 17" fill="none" stroke="#b9772c">
                <path d="M10 7l5-5 1 1-5 5" fill="#fff" />
                <path d="M9 5l4 4-4 5c-2 1-6 0-8-3l3-1z" fill="#f3c277" />
              </svg>
            </SmallRow>
          </SmallColumn>
        </GroupBody>
        <GroupLabel>Clipboard</GroupLabel>
        <LauncherIcon />
      </Group>

      <Group $w={234}>
        <GroupBody>
          <ControlRows $pad={9}>
            <ControlRow>
              <Combo $w={120}>Corbel<Chev /></Combo>
              <Combo $w={43}>11<Chev /></Combo>
              <Tool $w={28} $ml={2}><GrowA>A</GrowA><GrowMark><ChevronUp size={7} strokeWidth={2} /></GrowMark></Tool>
              <Tool $w={26}><GrowA $small>A</GrowA><GrowMark><ChevronDown size={7} strokeWidth={2} /></GrowMark></Tool>
            </ControlRow>
            <ControlRow>
              <Tool><BoldGlyph>B</BoldGlyph></Tool>
              <Tool><Italic size={13} strokeWidth={1.5} /></Tool>
              <Tool $w={22}><Underline size={14} strokeWidth={1.4} /></Tool>
              <Tool $w={16}><Chev /></Tool>
              <ToolDivider $ml={3} $mr={3} />
              <Tool $w={20}>
                <svg width="17" height="17" viewBox="0 0 17 17" fill="none" stroke="#222" strokeWidth="1.2">
                  <rect x="1" y="1" width="15" height="15" />
                  <path d="M8.500 1v15M1 8.500h15" />
                </svg>
              </Tool>
              <Tool $w={18}><Chev /></Tool>
              <ToolDivider $ml={0} $mr={1} />
              <Tool $w={30}>
                <svg width="17" height="19" viewBox="0 0 17 19" fill="none" stroke="#444">
                  <path d="M3 9l5-5 5 5-5 4z" />
                  <path d="M10 2c2 1 3 2 4 5M11 4l3-1v3" stroke="#1a7fa0" />
                  <rect x="0" y="15" width="17" height="4" fill="#f4ee3c" stroke="none" />
                </svg>
              </Tool>
              <Tool $w={6}><Chev /></Tool>
              <Tool $w={30} $ml={4}>
                <svg width="17" height="19" viewBox="0 0 17 19" fill="none" stroke="#444" strokeWidth="1.1">
                  <path d="M3.500 13 8.500 1l5 12M5.500 9h6" />
                  <rect x="0" y="15" width="17" height="4" fill="#b50f1f" stroke="none" />
                </svg>
              </Tool>
              <Tool $w={8}><Chev /></Tool>
            </ControlRow>
          </ControlRows>
        </GroupBody>
        <GroupLabel>Font</GroupLabel>
        <LauncherIcon />
      </Group>

      <Group $w={204}>
        <GroupBody>
          <ControlRows $pad={7}>
            <ControlRow>
              <Tool><VertAlign pos="top" /></Tool>
              <Tool><VertAlign pos="mid" /></Tool>
              <Tool $on><VertAlign pos="bot" /></Tool>
              <Tool>
                <svg width="17" height="17" viewBox="0 0 17 17" fill="none" stroke="#444">
                  <path d="M2 10 9 2M5 11l3-6" />
                  <path d="M8 14l7-6M12 8h3v3" stroke="#1a7fa0" />
                </svg>
              </Tool>
              <Tool $w={12}><Chev /></Tool>
              <ToolDivider $ml={20} $mr={9} />
              <Tool $w={20}>
                <svg width="18" height="18" viewBox="0 0 18 18" fill="none" stroke="#444">
                  <text x="3" y="8" fontSize="8" fill="#444" stroke="none" fontFamily="Noto Sans">ab</text>
                  <text x="1" y="16" fontSize="8" fill="#444" stroke="none" fontFamily="Noto Sans">c</text>
                  <path d="M15 9v3a2 2 0 0 1-2 2H8M10 12l-2 2 2 2" stroke="#1a7fa0" />
                </svg>
              </Tool>
            </ControlRow>
            <ControlRow>
              <Tool><AlignLines rows={[14, 9, 14, 9]} /></Tool>
              <Tool $on><AlignLines rows={[14, 9, 14, 9]} offset={1} /></Tool>
              <Tool><AlignLines rows={[14, 9, 14, 9]} offset={2} /></Tool>
              <Tool><IndentIcon /></Tool>
              <Tool><IndentIcon flip /></Tool>
              <ToolDivider $ml={6} $mr={8} />
              <Tool $on $w={44} $gap={8}>
                <svg width="18" height="18" viewBox="0 0 18 18" fill="none" stroke="#2c6f8a">
                  <rect x="1" y="1" width="15" height="16" fill="#c9e6f3" />
                  <path d="M1 5h15M1 13h15M3 9h11M5 7 3 9l2 2M12 7l2 2-2 2" />
                </svg>
                <Chev size={9} />
              </Tool>
            </ControlRow>
          </ControlRows>
        </GroupBody>
        <GroupLabel>Alignment</GroupLabel>
        <LauncherIcon />
      </Group>

      <Group $w={220} $noLine>
        <GroupBody>
          <ControlRows $pad={9}>
            <ControlRow><Combo $w={140}>General</Combo></ControlRow>
            <ControlRow>
              <Tool $w={22}>$</Tool>
              <Tool $w={14}><Chev /></Tool>
              <Tool $w={40}>%</Tool>
            </ControlRow>
          </ControlRows>
        </GroupBody>
        <GroupLabel>Number</GroupLabel>
      </Group>

      <FillFlex />

      <Group $w={16}>
        <ClippedMark>&amp;<Chev /></ClippedMark>
      </Group>
      <Group $w={64}>
        <AddInsBody>
          <svg width="30" height="30" viewBox="0 0 30 30" fill="none" stroke="#b5735a" strokeWidth="1.2">
            <rect x="1" y="1" width="28" height="28" />
            <rect x="4" y="4" width="10" height="10" />
            <rect x="16" y="4" width="10" height="10" />
            <rect x="4" y="16" width="10" height="10" />
            <rect x="16" y="16" width="10" height="10" />
          </svg>
          Add-ins
        </AddInsBody>
        <GroupLabel>Add-ins</GroupLabel>
      </Group>
      <Group $w={45} $noLine>
        <CollapseSlot><ChevronDown size={15} strokeWidth={1.4} /></CollapseSlot>
      </Group>
    </Ribbon>

    <FormulaBar>
      <NameBox>B11<Chev size={15} /></NameBox>
      <Dots>⋮</Dots>
      <FormulaButtons>
        <X size={17} strokeWidth={1} />
        <Check size={17} strokeWidth={1} />
        <FxMark>fx</FxMark>
      </FormulaButtons>
      <FormulaInput>
        Varying Interest Rates and Terms
        <ChevronDown size={15} color="#999" strokeWidth={1.2} />
      </FormulaInput>
    </FormulaBar>

    <SheetArea>
      <SheetGrid>
        <Corner />
        <ColumnHead>A</ColumnHead>
        <ColumnHead $on>B</ColumnHead>
        <ColumnHead $on>C</ColumnHead>
        <ColumnHead $on>D</ColumnHead>
        <ColumnHead $on>E</ColumnHead>
        <ColumnHead />
        <ColumnHead>J</ColumnHead>
        <Blank />

        <RowNumber>11</RowNumber>
        <Blank />
        <Cell $span={4} $bg="#a9d9f0" $plain>Varying Interest Rates and Terms</Cell>
        <Blank />
        <OutcomeCell $bold>(15,000)</OutcomeCell>
        <Blank />

        <RowNumber>12</RowNumber>
        <Blank />
        <Cell $bg="#a0b1b8" $bold $plain $right="#7f9fb0">Rate</Cell>
        <Cell $span={3} $bg="#a0b1b8" $bold $size={15} $plain>Number of Months</Cell>
        <Blank />
        <OutcomeCell />
        <Blank />

        <RowNumber>13</RowNumber>
        <Blank />
        <Cell $bg="#a0b1b8" $bold $size={14.5} $plain $right="#7f9fb0" $under="#6f94a8">$31,333.75</Cell>
        <Cell $bg="#a0b1b8" $bold $size={14} $plain $under="#6f94a8">180</Cell>
        <Cell $bg="#a0b1b8" $bold $size={14} $plain $under="#6f94a8">240</Cell>
        <Cell $bg="#a0b1b8" $bold $size={14} $plain $under="#6f94a8">360</Cell>
        <Blank $span={3} />

        {loanRows.map((r) => (
          <React.Fragment key={r.row}>
            <RowNumber>{r.row}</RowNumber>
            <Blank />
            <Cell $bg={r.hit ? '#98c49e' : undefined}>{r.rate}</Cell>
            <MoneyCell><Dollar>$</Dollar>{r.c}</MoneyCell>
            <MoneyCell><Dollar>$</Dollar>{r.d}</MoneyCell>
            <MoneyCell><Dollar>$</Dollar>{r.e}</MoneyCell>
            <Blank $span={3} />
          </React.Fragment>
        ))}
        <Selection />
      </SheetGrid>
      <VScroll>
        <ArrowUp />
        <VThumb />
        <ArrowDown />
      </VScroll>
    </SheetArea>

    <SheetTabs>
      <SheetTab>Documentation</SheetTab>
      <SheetTab $active>Loan Analysis</SheetTab>
      <HScroll>
        <HThumb />
        <ArrowRight />
      </HScroll>
    </SheetTabs>

    <StatusBar>
      <ReadyText>R</ReadyText>
      <A11y>
        <svg width="13" height="13" viewBox="0 0 13 13" fill="none" stroke="#555">
          <circle cx="6" cy="2.5" r="1.5" />
          <path d="M1 5h10M6 5v3l-3 4M6 8l3 4" />
        </svg>
        Accessibility: Investigate
      </A11y>
      <CountText>4</CountText>
      <ViewButton $on>
        <svg width="15" height="15" viewBox="0 0 15 15" fill="none" stroke="#444">
          <path d="M1 1h13v13H1zM1 5.300h13M1 9.600h13M5.300 1v13M9.600 1v13" />
        </svg>
      </ViewButton>
      <ViewButton>
        <svg width="14" height="15" viewBox="0 0 14 15" fill="none" stroke="#444">
          <path d="M1 1h12v13H1zM3.500 4h7M3.500 6.500h7M3.500 9h7M3.500 11.500h7" />
        </svg>
      </ViewButton>
      <ViewButton>
        <svg width="15" height="15" viewBox="0 0 15 15" fill="none" stroke="#444">
          <path d="M1 1h13v13H1zM5 1v7h6V1M1 8h4" />
        </svg>
      </ViewButton>
      <ZoomSlider>
        <Minus size={9} />
        <ZoomTrack><ZoomKnob /></ZoomTrack>
        <Plus size={9} />
      </ZoomSlider>
      <ZoomValue>120%</ZoomValue>
    </StatusBar>

    <TaskBar>
      <StartSlot>
        <svg width="16" height="16" viewBox="0 0 16 16" fill="#0c0c0c">
          <path d="M0 2.200 7 1.200V7.400H0zM7.800 1 16 0V7.400H7.800zM0 8.200H7V14.600L0 13.600zM7.800 8.200H16V16L7.800 14.800z" />
        </svg>
      </StartSlot>
      <TaskSearch>
        <FlippedSearch size={19} strokeWidth={1.4} />
        <span>Type here to search</span>
        <Sparkle width="62" height="30" viewBox="0 0 62 30">
          <path d="M24 2c1 8 3 10 9 12-6 2-8 4-9 12-1-8-3-10-9-12 6-2 8-4 9-12z" fill="#f7c331" />
          <path d="M44 12c.5 4 1.500 5 5 6-3.500 1-4.500 2-5 6-.5-4-1.500-5-5-6 3.500-1 4.500-2 5-6z" fill="#f1b82d" />
          <path d="M5 18l1.500 3.500L10 23l-3.500 1.500L5 28l-1.500-3.500L0 23l3.500-1.500z" fill="#33b3dc" />
          <circle cx="36" cy="3" r="2" fill="#c8553c" />
          <circle cx="55" cy="25" r="2" fill="#9dc75c" />
        </Sparkle>
      </TaskSearch>
      <TaskSlot $w={52}>
        <svg width="16" height="17" viewBox="0 0 16 17" fill="none" stroke="#555">
          <path d="M1 4h11v9H1zM1 1h11M1 16h11M15 4v9" />
        </svg>
      </TaskSlot>
      <TaskSlot>
        <svg width="24" height="22" viewBox="0 0 24 22">
          <path d="M8 2 18 0l6 6v10l-6 6-10-2z" fill="#1490df" />
          <path d="M12 8l12-2v10l-6 6z" fill="#35bdf0" />
          <rect x="0" y="6" width="12" height="12" rx="2" fill="#0a5fa8" />
          <circle cx="6" cy="12" r="3" fill="none" stroke="#fff" strokeWidth="1.6" />
        </svg>
      </TaskSlot>
      <TaskSlot $open>
        <svg width="22" height="20" viewBox="0 0 22 20">
          <path d="M0 0h9l2 3h11v17H0z" fill="#f5c542" />
          <path d="M0 7h22v13H0z" fill="#fbd96b" />
          <path d="M7 20v-6h8v6" fill="#2a93d1" />
        </svg>
      </TaskSlot>
      <TaskSlot>
        <svg width="22" height="22" viewBox="0 0 22 22">
          <rect width="22" height="22" rx="3" fill="#1b3f7a" />
          <rect x="6" y="6" width="4.500" height="4.500" fill="#e8532d" />
          <rect x="11.500" y="6" width="4.500" height="4.500" fill="#7fba00" />
          <rect x="6" y="11.500" width="4.500" height="4.500" fill="#1fa3e6" />
          <rect x="11.500" y="11.500" width="4.500" height="4.500" fill="#fdb900" />
        </svg>
      </TaskSlot>
      <TaskSlot>
        <svg width="24" height="24" viewBox="0 0 24 24">
          <circle cx="12" cy="12" r="12" fill="#1a7fc4" />
          <path d="M3 8c3-6 13-7 18-1 2 3 2 7-1 7-4 0-4-3-8-3-5 0-8 3-9-3z" fill="#46d39a" />
          <path d="M9 13c0 6 6 9 12 5-5 1-8-1-8-5z" fill="#dff3f8" />
        </svg>
      </TaskSlot>
      <TaskSlot>
        <svg width="24" height="24" viewBox="0 0 24 24" fill="none">
          <ellipse cx="12" cy="12" rx="9.500" ry="11" stroke="#d8111e" strokeWidth="4.500" />
        </svg>
      </TaskSlot>
      <TaskSlot $open>
        <svg width="22" height="20" viewBox="0 0 22 20">
          <rect x="5" width="17" height="20" rx="2" fill="#2b7cd3" />
          <rect x="5" y="10" width="17" height="10" fill="#185abd" />
          <rect x="0" y="4" width="13" height="12" rx="1.500" fill="#103f91" />
          <text x="2" y="13.500" fontSize="9" fontWeight="700" fill="#fff" fontFamily="Liberation Sans">W</text>
        </svg>
      </TaskSlot>
      <TaskSlot $open $active>
        <svg width="22" height="20" viewBox="0 0 22 20">
          <rect x="5" width="17" height="20" rx="2" fill="#21a366" />
          <rect x="13" width="9" height="10" fill="#33c481" />
          <rect x="5" y="10" width="17" height="10" fill="#107c41" />
          <rect x="0" y="4" width="13" height="12" rx="1.500" fill="#185c37" />
          <text x="3" y="13.500" fontSize="9" fontWeight="700" fill="#fff" fontFamily="Liberation Sans">x</text>
        </svg>
      </TaskSlot>
      <TaskSlot>
        <svg width="24" height="24" viewBox="0 0 24 24">
          <path d="M12 0a12 12 0 0 1 10.400 6H12a6 6 0 0 0-5.600 3.800L2.300 4.700A12 12 0 0 1 12 0z" fill="#db4437" />
          <path d="M22.400 6A12 12 0 0 1 12 24l5-8.500A6 6 0 0 0 17 6z" fill="#f4c20d" />
          <path d="M12 24A12 12 0 0 1 2.300 4.700L7 13a6 6 0 0 0 7 4.700z" fill="#0f9d58" />
          <circle cx="12" cy="12" r="5" fill="#4285f4" stroke="#fff" />
        </svg>
      </TaskSlot>
      <TaskSlot $open>
        <svg width="24" height="24" viewBox="0 0 24 24">
          <rect width="24" height="24" rx="4" fill="#1e3d4d" />
          <path d="M11 3l5 5-5 5 2-5z" fill="#40e0c8" />
          <path d="M10 19h4" stroke="#fff" strokeWidth="1.500" />
        </svg>
      </TaskSlot>
      <Tray>
        <svg width="22" height="22" viewBox="0 0 22 22">
          <path d="M2 10a8 8 0 0 1 10-7L8 18H4z" fill="#f4a12d" />
          <circle cx="15" cy="5" r="5" fill="#c9302c" />
          <text x="13" y="8" fontSize="7" fill="#fff" fontFamily="Liberation Sans">2</text>
          <ellipse cx="12" cy="17" rx="8" ry="4" fill="#e9eef4" />
        </svg>
        <WeatherText>9°C</WeatherText>
        <TraySlot>
          <svg width="16" height="16" viewBox="0 0 16 16">
            <circle cx="8" cy="8" r="8" fill="#e8526a" />
            <rect x="5" y="5" width="6" height="6" fill="#25122a" />
          </svg>
        </TraySlot>
        <TraySlot>
          <svg width="12" height="18" viewBox="0 0 12 18">
            <rect width="12" height="18" rx="6" fill="#1787dd" />
          </svg>
          <BluetoothMark size={11} color="#fff" strokeWidth={2} />
        </TraySlot>
        <TraySlot><CloudOff size={16} strokeWidth={1.3} /></TraySlot>
        <TraySlot>
          <svg width="15" height="10" viewBox="0 0 15 10" fill="none" stroke="#222">
            <rect x=".5" y=".5" width="13" height="9" />
            <rect x="2" y="2" width="7" height="6" fill="#222" stroke="none" />
          </svg>
        </TraySlot>
        <TraySlot><Globe size={17} strokeWidth={1.1} /></TraySlot>
        <TraySlot><Volume1 size={16} strokeWidth={1.2} /></TraySlot>
        <TraySlot><Shield size={17} strokeWidth={1.2} /></TraySlot>
        <Clock>8:14 PM<br />1/18/2026</Clock>
        <NotifySlot><MessageSquare size={17} fill="#111" strokeWidth={1} /></NotifySlot>
      </Tray>
    </TaskBar>

    <LogoBox>
      <LogoRing>
        <LogoWreath />
        C
      </LogoRing>
      <LogoBanner />
      <LogoTitle>Cengage Helper</LogoTitle>
      <LogoSub>TUTORING HELP</LogoSub>
    </LogoBox>

    <Dialog>
      <DialogTitle>
        Format Cells
        <HelpMark>?</HelpMark>
        <DialogClose><X size={17} strokeWidth={1.1} /></DialogClose>
      </DialogTitle>
      <DialogTabs>
        <DialogTab $w={60}>Number</DialogTab>
        <DialogTab $w={68}>Alignment</DialogTab>
        <DialogTab $w={60}>Font</DialogTab>
        <DialogTab $w={61} $on><FocusLabel>Border</FocusLabel></DialogTab>
        <DialogTab $w={60}>Fill</DialogTab>
        <DialogTab $w={65}>Protection</DialogTab>
      </DialogTabs>
      <DialogPanel>
        <Columns>
          <LineGroup>
            <GroupLegend>Line</GroupLegend>
            <FieldLabel><u>S</u>tyle:</FieldLabel>
            <StyleList>
              {lineSamples.map((sample, i) => (
                <StyleItem key={i} $boxed={i === 12}>{sample}</StyleItem>
              ))}
            </StyleList>
            <FieldLabel><u>C</u>olor:</FieldLabel>
            <ColorCombo>
              <ColorSwatch />
              <ColorDrop><Chev /></ColorDrop>
            </ColorCombo>
          </LineGroup>
          <RightColumn>
            <RuleTitle $mt={-6}>Presets</RuleTitle>
            <PresetRow>
              <Preset><PresetFace><PresetGlyph /></PresetFace><PresetCaption><u>N</u>one</PresetCaption></Preset>
              <Preset><PresetFace><PresetGlyph outline /></PresetFace><PresetCaption><u>O</u>utline</PresetCaption></Preset>
              <Preset><PresetFace><PresetGlyph inner /></PresetFace><PresetCaption><u>I</u>nside</PresetCaption></Preset>
            </PresetRow>
            <RuleTitle $mt={7}>Border</RuleTitle>
            <BorderBlock>
              <SideButtons>
                <BorderToggle $on><BoxGlyph top /></BorderToggle>
                <BorderToggle><BoxGlyph hMid /></BorderToggle>
                <BorderToggle $on><BoxGlyph bottom /></BorderToggle>
              </SideButtons>
              <PreviewBox>
                <PreviewLines width="164" height="101" viewBox="0 0 164 101" fill="none">
                  <path d="M3 6h155M3 97h155M5 3v96" stroke="#8ec2c6" />
                  <path d="M160 3v96" stroke="#aed5d6" strokeWidth="2" />
                  <path d="M82 2v98M3 52h158" stroke="#c6cfd0" />
                </PreviewLines>
                <PreviewText $top>Text</PreviewText>
                <PreviewText $top $right>Text</PreviewText>
                <PreviewText>Text</PreviewText>
                <PreviewText $right>Text</PreviewText>
                <CursorSvg width="12" height="19" viewBox="0 0 12 19">
                  <path d="M1 1v14l3.500-3 2.500 6 2.500-1-2.500-6H11z" fill="#fff" stroke="#111" />
                </CursorSvg>
              </PreviewBox>
            </BorderBlock>
            <BottomToggles>
              <BorderToggle $on><BoxGlyph diagA /></BorderToggle>
              <BorderToggle $on $ml={11}><BoxGlyph left /></BorderToggle>
              <BorderToggle $ml={45}><BoxGlyph vMid /></BorderToggle>
              <BorderToggle $on $ml={45}><BoxGlyph right /></BorderToggle>
              <BorderToggle $ml={11}><BoxGlyph diagB /></BorderToggle>
            </BottomToggles>
          </RightColumn>
        </Columns>
        <HintText>The selected border style can be applied by clicking the presets, preview diagram or the buttons above.</HintText>
      </DialogPanel>
      <DialogFooter>
        <DialogButton $primary>OK</DialogButton>
        <DialogButton>Cancel</DialogButton>
      </DialogFooter>
    </Dialog>

    <Watermark>WhatsApp Number =+923187569415</Watermark>
  </Page>
);

export default App;
